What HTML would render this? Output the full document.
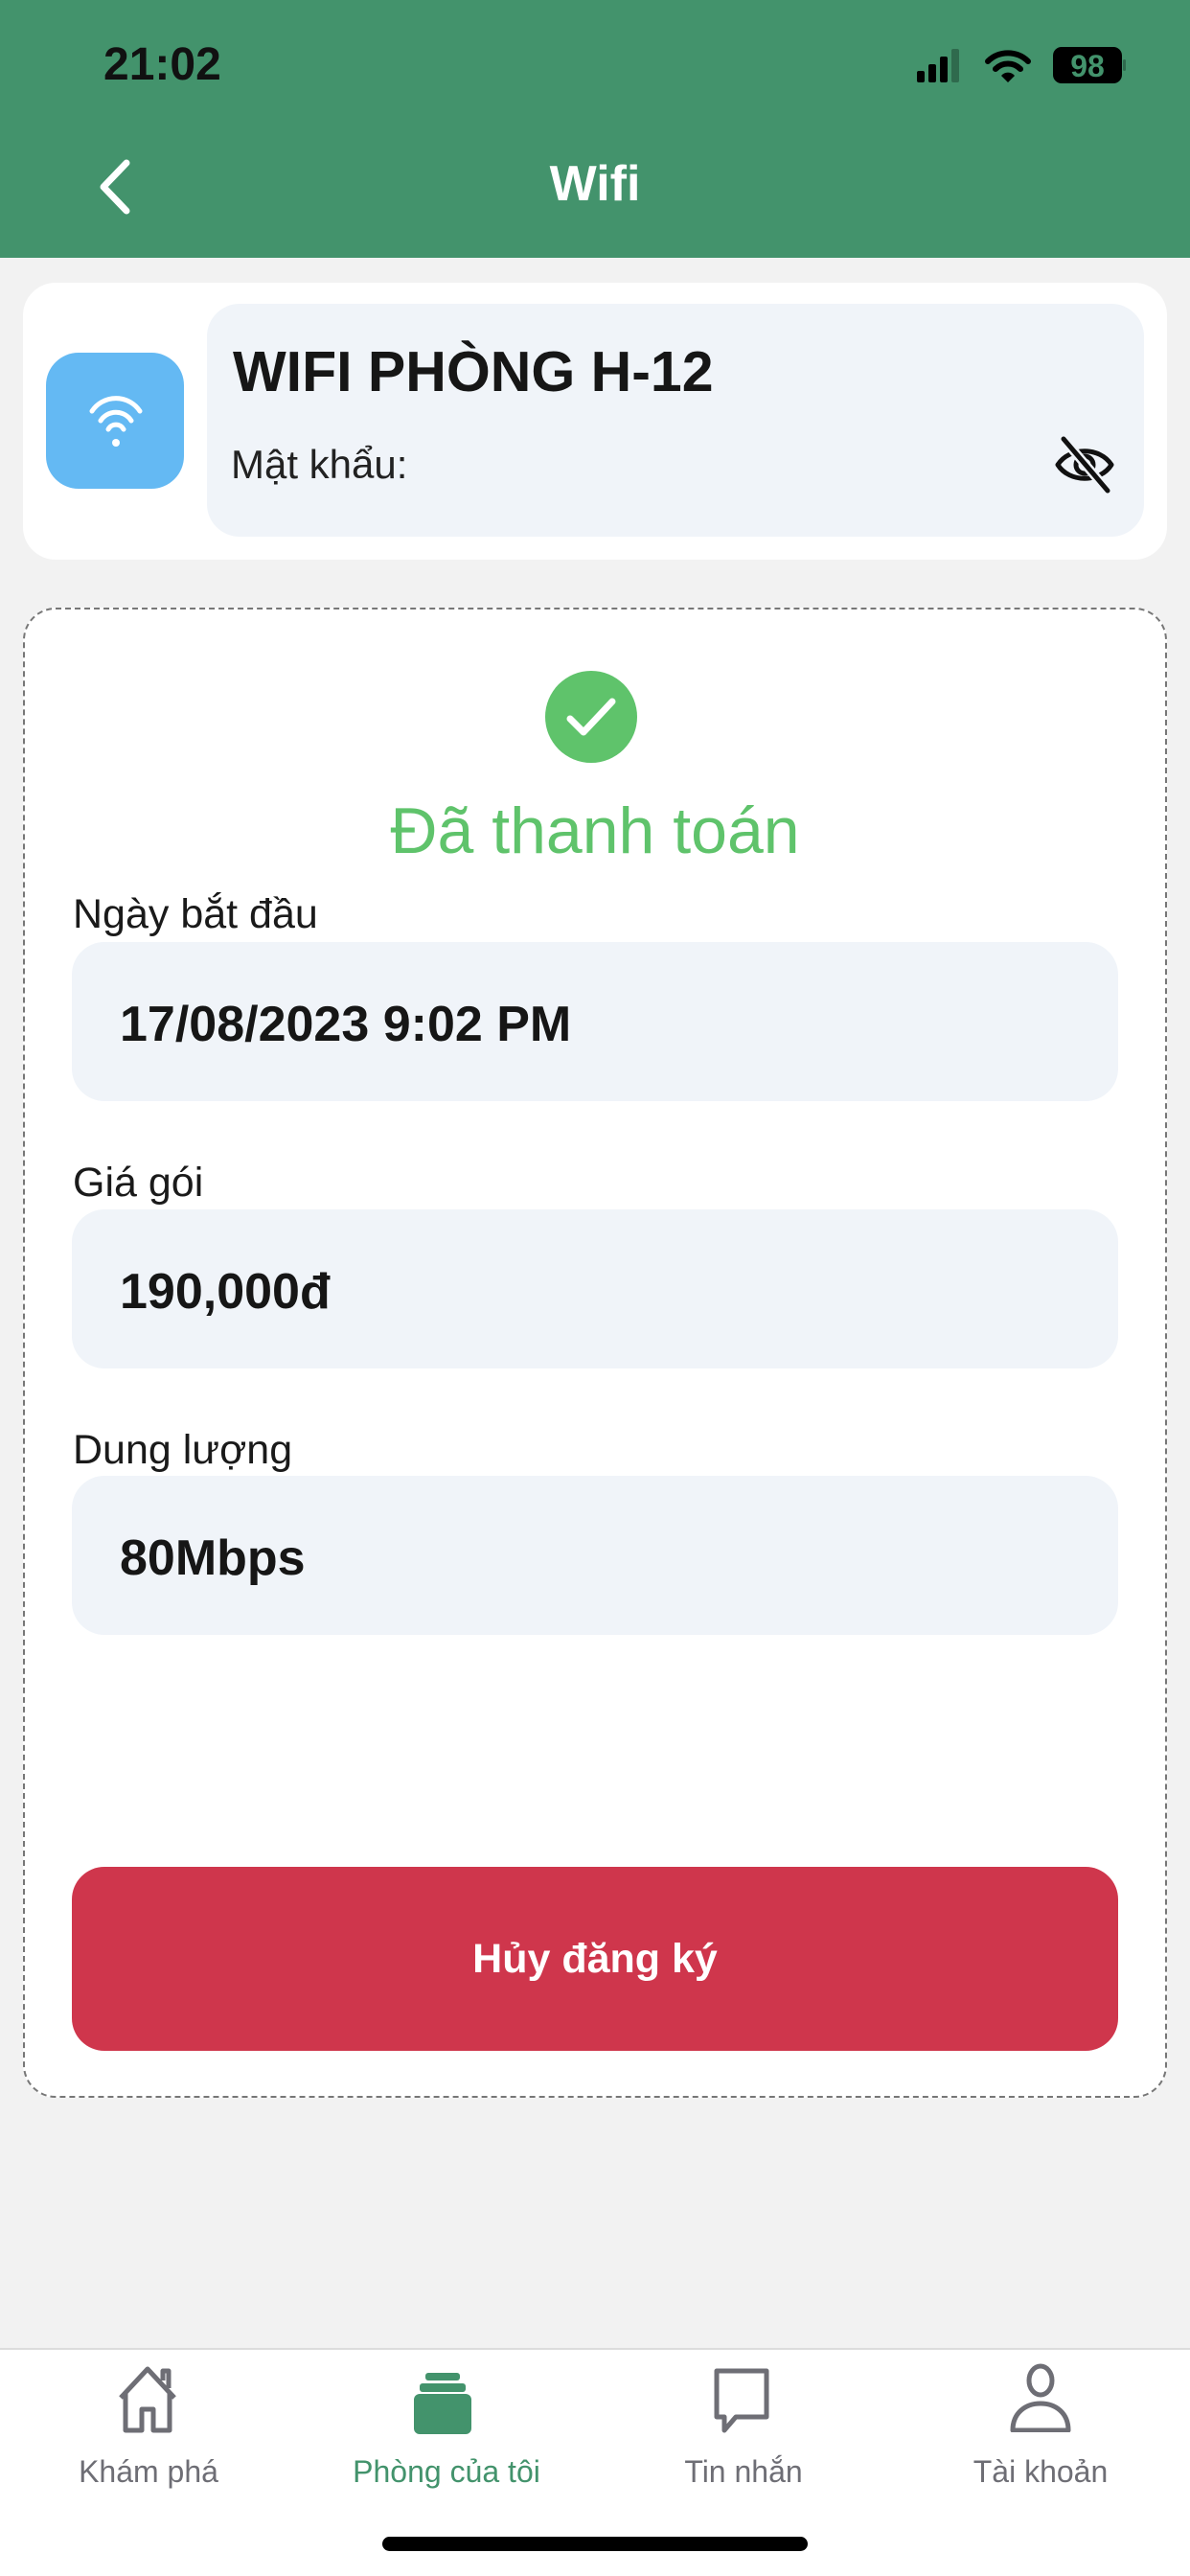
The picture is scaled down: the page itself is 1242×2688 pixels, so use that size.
<!DOCTYPE html>
<html><head><meta charset="utf-8">
<style>
*{margin:0;padding:0;box-sizing:border-box}
body{width:1242px;height:2688px;background:#F2F2F2;font-family:"Liberation Sans",sans-serif;position:relative;overflow:hidden;color:#1a1a1a}
.abs{position:absolute}
.hdr{left:0;top:0;width:1242px;height:269px;background:#43936C}
.time{left:108px;top:40px;font-size:48px;font-weight:bold;color:#111}
.title{left:0;width:1242px;top:162px;text-align:center;font-size:52px;font-weight:bold;color:#fff}
.card1{left:24px;top:295px;width:1194px;height:289px;background:#fff;border-radius:34px}
.wbox{left:48px;top:368px;width:144px;height:142px;background:#64B9F3;border-radius:34px}
.inner{left:216px;top:317px;width:978px;height:243px;background:#F0F4F9;border-radius:34px}
.wname{left:243px;top:354px;font-size:59px;font-weight:bold;color:#161616}
.pw{left:241px;top:461px;font-size:42px;color:#222}
.dash{left:24px;top:634px;width:1194px;height:1555px;border:2.5px dashed #777;border-radius:34px;background:#fff}
.paid{left:0;width:1242px;top:828px;text-align:center;font-size:68px;color:#5FC36B}
.lbl{left:76px;font-size:43px;color:#1a1a1a}
.fld{left:75px;width:1092px;height:166px;background:#F0F4F9;border-radius:34px}
.val{left:125px;font-size:52px;font-weight:bold;color:#161616}
.btn{left:75px;top:1948px;width:1092px;height:192px;background:#CF364C;border-radius:34px;color:#fff;font-size:43px;font-weight:bold;text-align:center;line-height:192px}
.tab{left:0;top:2450px;width:1242px;height:238px;background:#fff;border-top:2px solid #dcdcdc}
.tl{top:2561px;font-size:32px;color:#6e6e75;width:300px;text-align:center}
.home{left:399px;top:2647px;width:444px;height:15px;background:#000;border-radius:8px}
</style></head><body>
<div class="abs hdr"></div>
<div class="abs time">21:02</div>
<svg class="abs" style="left:955px;top:48px" width="220" height="40" viewBox="0 0 220 40">
<rect x="2" y="26" width="8" height="12" rx="2" fill="#000"/>
<rect x="14" y="19" width="8" height="19" rx="2" fill="#000"/>
<rect x="26" y="11" width="8" height="27" rx="2" fill="#000"/>
<rect x="38" y="3" width="8" height="35" rx="2" fill="#2f6a4d"/>
<path d="M76 16 A30 30 0 0 1 118 16" stroke="#000" stroke-width="6" fill="none" stroke-linecap="round"/>
<path d="M84 24 A18 18 0 0 1 110 24" stroke="#000" stroke-width="6" fill="none" stroke-linecap="round"/>
<path d="M90 31 L97 38 L104 31 A9 9 0 0 0 90 31Z" fill="#000"/>
<rect x="144" y="1" width="72" height="38" rx="9" fill="#000"/>
<text x="180" y="32" text-anchor="middle" font-family="Liberation Sans" font-weight="bold" font-size="32" fill="#43936C">98</text>
<rect x="217" y="14" width="3" height="12" rx="1.5" fill="#2f6a4d"/>
</svg>
<svg class="abs" style="left:96px;top:164px" width="46" height="62" viewBox="0 0 46 62"><path d="M36 6 L12 31 L36 56" stroke="#fff" stroke-width="7" fill="none" stroke-linecap="round" stroke-linejoin="round"/></svg>
<div class="abs title">Wifi</div>

<div class="abs card1"></div>
<div class="abs wbox"></div>
<svg class="abs" style="left:86px;top:405px" width="70" height="70" viewBox="0 0 70 70">
<path d="M10 24 A30 30 0 0 1 60 24" stroke="#fff" stroke-width="5" fill="none" stroke-linecap="round"/>
<path d="M19 34 A19 19 0 0 1 51 34" stroke="#fff" stroke-width="5" fill="none" stroke-linecap="round"/>
<path d="M27 43 A9 9 0 0 1 43 43" stroke="#fff" stroke-width="5" fill="none" stroke-linecap="round"/>
<circle cx="35" cy="57" r="4" fill="#fff"/>
</svg>
<div class="abs inner"></div>
<div class="abs wname">WIFI PHÒNG H-12</div>
<div class="abs pw">Mật khẩu:</div>
<svg class="abs" style="left:1096px;top:454px" width="72" height="62" viewBox="0 0 72 62">
<path d="M8 31 C20 12 52 12 64 31 C52 50 20 50 8 31Z" stroke="#111" stroke-width="5" fill="none" stroke-linejoin="round"/>
<circle cx="36" cy="31" r="9" stroke="#111" stroke-width="5" fill="none"/>
<path d="M14 4 L60 58" stroke="#F0F4F9" stroke-width="10"/>
<path d="M14 4 L60 58" stroke="#111" stroke-width="5" stroke-linecap="round"/>
</svg>

<div class="abs dash"></div>
<svg class="abs" style="left:569px;top:700px" width="96" height="96" viewBox="0 0 96 96">
<circle cx="48" cy="48" r="48" fill="#5FC36B"/>
<path d="M26 50 L40 64 L70 32" stroke="#fff" stroke-width="7" fill="none" stroke-linecap="round" stroke-linejoin="round"/>
</svg>
<div class="abs paid">Đã thanh toán</div>

<div class="abs lbl" style="top:930px">Ngày bắt đầu</div>
<div class="abs fld" style="top:983px"></div>
<div class="abs val" style="top:1039px">17/08/2023 9:02 PM</div>

<div class="abs lbl" style="top:1210px">Giá gói</div>
<div class="abs fld" style="top:1262px"></div>
<div class="abs val" style="top:1318px">190,000đ</div>

<div class="abs lbl" style="top:1489px">Dung lượng</div>
<div class="abs fld" style="top:1540px"></div>
<div class="abs val" style="top:1596px">80Mbps</div>

<div class="abs btn">Hủy đăng ký</div>

<div class="abs tab"></div>
<svg class="abs" style="left:118px;top:2468px" width="72" height="72" viewBox="0 0 72 72">
<path d="M8 34 L36 4 L64 34 M13 28 V68 H30 V46 H42 V68 H59 V28 M52 16 V6 H58 V24" stroke="#6e6e75" stroke-width="5" fill="none" stroke-linejoin="round"/>
</svg>
<svg class="abs" style="left:428px;top:2470px" width="72" height="72" viewBox="0 0 72 72">
<rect x="16" y="6" width="36" height="8" rx="3" fill="#43936C"/>
<rect x="10" y="17" width="48" height="9" rx="3" fill="#43936C"/>
<rect x="4" y="28" width="60" height="42" rx="6" fill="#43936C"/>
</svg>
<svg class="abs" style="left:738px;top:2468px" width="72" height="72" viewBox="0 0 72 72">
<path d="M10 6 H62 V54 H30 L18 68 V54 H10Z" stroke="#6e6e75" stroke-width="5" fill="none" stroke-linejoin="round"/>
</svg>
<svg class="abs" style="left:1050px;top:2466px" width="72" height="72" viewBox="0 0 72 72">
<ellipse cx="36" cy="18" rx="12" ry="15" stroke="#6e6e75" stroke-width="5" fill="none"/>
<path d="M7 70 C7 52 20 42 36 42 C52 42 65 52 65 70Z" stroke="#6e6e75" stroke-width="5" fill="none" stroke-linejoin="round"/>
</svg>
<div class="abs tl" style="left:5px">Khám phá</div>
<div class="abs tl" style="left:316px;color:#43936C">Phòng của tôi</div>
<div class="abs tl" style="left:626px">Tin nhắn</div>
<div class="abs tl" style="left:936px">Tài khoản</div>
<div class="abs home"></div>
</body></html>
